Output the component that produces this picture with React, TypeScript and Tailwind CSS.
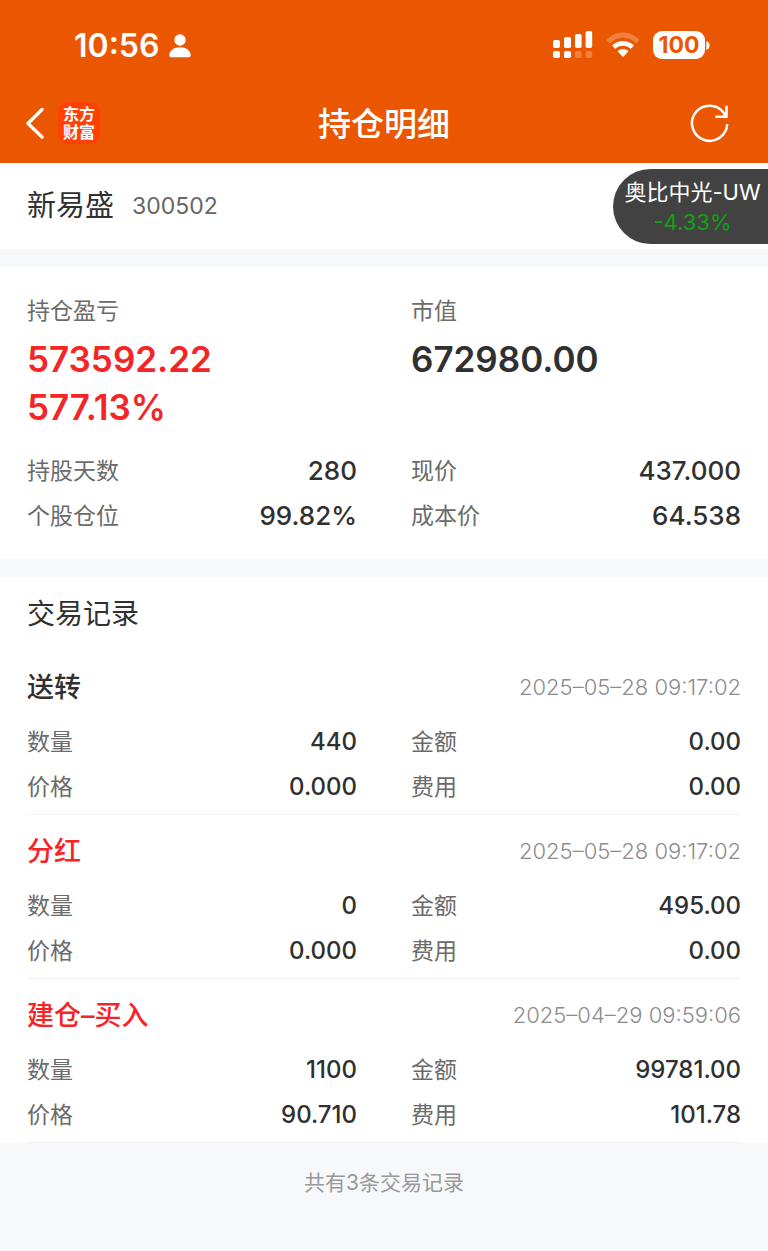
type Tone = "red" | "dark";

interface Field {
  label: string;
  value: string;
}

interface TradeRecord {
  title: string;
  tone: Tone;
  time: string;
  fields: Field[];
}

const positionFields: Field[] = [
  { label: "持股天数", value: "280" },
  { label: "现价", value: "437.000" },
  { label: "个股仓位", value: "99.82%" },
  { label: "成本价", value: "64.538" },
];

const records: TradeRecord[] = [
  {
    title: "送转",
    tone: "dark",
    time: "2025–05–28 09:17:02",
    fields: [
      { label: "数量", value: "440" },
      { label: "金额", value: "0.00" },
      { label: "价格", value: "0.000" },
      { label: "费用", value: "0.00" },
    ],
  },
  {
    title: "分红",
    tone: "red",
    time: "2025–05–28 09:17:02",
    fields: [
      { label: "数量", value: "0" },
      { label: "金额", value: "495.00" },
      { label: "价格", value: "0.000" },
      { label: "费用", value: "0.00" },
    ],
  },
  {
    title: "建仓–买入",
    tone: "red",
    time: "2025–04–29 09:59:06",
    fields: [
      { label: "数量", value: "1100" },
      { label: "金额", value: "99781.00" },
      { label: "价格", value: "90.710" },
      { label: "费用", value: "101.78" },
    ],
  },
];

function FieldGrid({ fields, large = false }: { fields: Field[]; large?: boolean }) {
  return (
    <dl className="grid grid-cols-2 gap-x-[54px] leading-[46px]">
      {fields.map((field) => (
        <div key={field.label} className="flex h-[45px] justify-between">
          <dt className="text-[23px] text-[#6b6b6b]">{field.label}</dt>
          <dd className={large ? "text-[26px] font-medium" : "text-[24px] font-medium"}>{field.value}</dd>
        </div>
      ))}
    </dl>
  );
}

function StatusBar() {
  return (
    <div className="flex h-[90px] items-center justify-between pr-[58px] pl-[74px]">
      <div className="flex items-center gap-[10px] pt-[2px]">
        <span className="text-[32px] leading-10 font-semibold">10:56</span>
        <svg width="22" height="24" viewBox="0 0 22 24" fill="currentColor" aria-hidden="true">
          <circle cx="11" cy="6" r="5.7" />
          <path d="M0.3 21.2C0.3 16.6 5 13.3 11 13.3S21.7 16.6 21.7 21.2C21.7 22.7 20.9 23.3 19.5 23.3H2.5C1.1 23.3 0.3 22.7 0.3 21.2Z" />
        </svg>
      </div>
      <div className="flex items-center">
        <svg width="40" height="28" viewBox="0 0 40 28" fill="currentColor" aria-hidden="true">
          <rect x="0" y="9" width="7" height="8" rx="1.8" />
          <rect x="11" y="6" width="7" height="11" rx="1.8" />
          <rect x="22" y="3" width="6.6" height="14" rx="1.8" />
          <rect x="32.6" y="0" width="6.6" height="17" rx="1.8" />
          <rect x="0" y="20" width="7" height="7" rx="1.8" />
          <rect x="11" y="20" width="7" height="7" rx="1.8" />
          <rect x="22" y="20" width="6.6" height="7" rx="1.8" opacity="0.25" />
          <rect x="32.6" y="20" width="6.6" height="7" rx="1.8" opacity="0.25" />
        </svg>
        <svg className="ml-[13px]" width="34" height="26" viewBox="0 0 34 26" fill="currentColor" aria-hidden="true">
          <path opacity="0.25" d="M0.5 8.1C9.5 -1.9 24.5 -1.9 33.5 8.1L30.2 11.5C23 3.5 11 3.5 3.8 11.5Z" />
          <path d="M6 13.6C12 7.4 22 7.4 28 13.6L24.7 16.9C20.5 12.6 13.5 12.6 9.3 16.9Z" />
          <path d="M11.5 19.1C14.6 16.2 19.4 16.2 22.5 19.1L17.7 24.4Q17 25.1 16.3 24.4Z" />
        </svg>
        <div className="ml-[13px] flex h-7 w-[52px] items-center justify-center rounded-[9px] bg-white text-[23px] leading-7 font-bold text-[#eb5600]">
          100
        </div>
        <svg className="ml-px" width="4" height="9" viewBox="0 0 4 9" fill="currentColor" aria-hidden="true">
          <path d="M0.3 0C2.4 0.8 3.6 2.5 3.6 4.5S2.4 8.2 0.3 9Z" />
        </svg>
      </div>
    </div>
  );
}

function NavBar() {
  return (
    <div className="grid h-[73px] grid-cols-[1fr_auto_1fr] items-start px-[25px]">
      <div className="flex h-[66px] items-center gap-[13px]">
        <button type="button" aria-label="返回">
          <svg width="20" height="32" viewBox="0 0 20 32" fill="none" stroke="currentColor" strokeWidth="3.4" strokeLinecap="round" strokeLinejoin="round" aria-hidden="true">
            <path d="M17 2.5L3 16.5L17 30" />
          </svg>
        </button>
        <div className="flex h-[42px] w-[42px] flex-col items-center justify-center rounded-[9px] bg-[#ff4106] text-[16px] leading-[18px] font-bold">
          <span>东方</span>
          <span>财富</span>
        </div>
      </div>
      <h1 className="text-[33px] leading-[68px] font-medium">持仓明细</h1>
      <div className="flex h-[66px] items-center justify-end pr-[13px]">
        <button type="button" aria-label="刷新">
          <svg width="40" height="40" viewBox="0 0 40 40" fill="none" stroke="currentColor" strokeWidth="2.5" aria-hidden="true">
            <path d="M37.2 21A17.6 17.6 0 1 1 34 10.1L35.5 13" />
            <path d="M25.5 13.7H36.5V2.8" />
          </svg>
        </button>
      </div>
    </div>
  );
}

export default function App() {
  return (
    <div className="relative min-h-screen bg-[#f7f8fa] font-['Inter','Noto_Sans_CJK_SC',sans-serif] text-[#303030]">
      <header className="bg-[#eb5600] text-white">
        <StatusBar />
        <NavBar />
      </header>

      <aside className="absolute top-[169px] right-0 flex h-[75px] w-[155px] flex-col items-center justify-center rounded-l-[38px] bg-[#424242] pl-1 text-[22px] leading-[30px] whitespace-nowrap">
        <span className="text-white">奥比中光-UW</span>
        <span className="text-[#15a015]">-4.33%</span>
      </aside>

      <main>
        <section className="flex h-[86px] items-center gap-[18px] bg-white px-[27px]">
          <h2 className="text-[29px] leading-[86px]">新易盛</h2>
          <span className="text-[23px] text-[#666666]">300502</span>
        </section>

        <section className="mt-[18px] bg-white px-[27px] pt-5 pb-[21px]">
          <dl className="mb-[17px] grid grid-cols-2 gap-x-[54px] leading-[48px]">
            <div>
              <dt className="text-[23px] text-[#6b6b6b]">持仓盈亏</dt>
              <dd className="text-[35px] font-semibold text-[#f42427]">573592.22</dd>
              <dd className="text-[35px] font-semibold text-[#f42427]">577.13%</dd>
            </div>
            <div>
              <dt className="text-[23px] text-[#6b6b6b]">市值</dt>
              <dd className="text-[35px] font-semibold">672980.00</dd>
            </div>
          </dl>
          <FieldGrid fields={positionFields} large />
        </section>

        <section className="mt-[18px] bg-white px-[27px]">
          <h2 className="text-[28px] leading-[74px]">交易记录</h2>
          {records.map((record) => (
            <article key={record.title} className="border-b border-[#f2f2f4] pt-1 pb-[5px]">
              <div className="flex h-16 items-center justify-between">
                <h3 className={record.tone === "red" ? "pt-[2px] text-[27px] leading-[64px] font-medium text-[#f42427]" : "pt-[2px] text-[27px] leading-[64px] font-medium"}>
                  {record.title}
                </h3>
                <time className="text-[22px] font-light text-[#8c8c8c]">{record.time}</time>
              </div>
              <FieldGrid fields={record.fields} />
            </article>
          ))}
        </section>
      </main>

      <footer className="text-center text-[21px] leading-[80px] text-[#999999]">共有3条交易记录</footer>
    </div>
  );
}
